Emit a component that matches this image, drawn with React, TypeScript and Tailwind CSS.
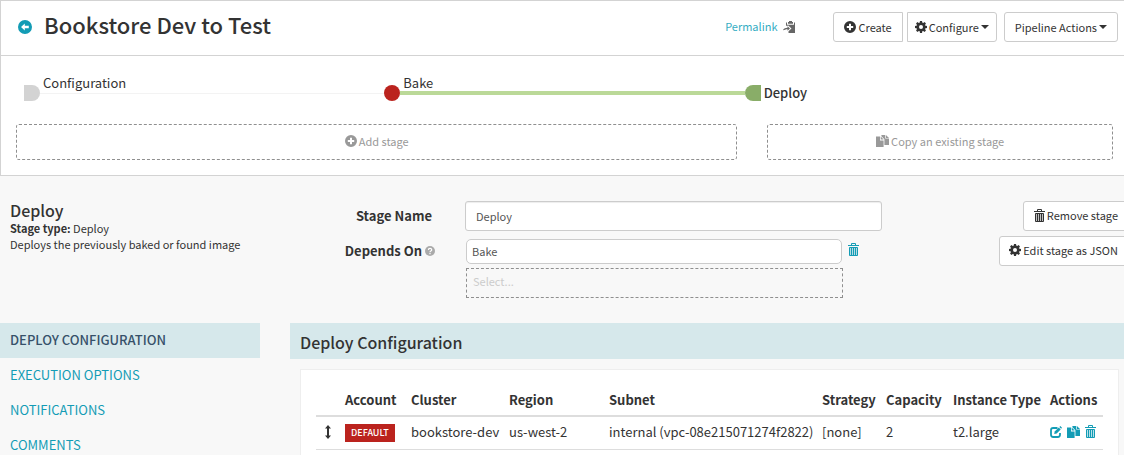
import React from "react";

type IconProps = { className?: string };

function PlusCircle({ className = "" }: IconProps) {
  return (
    <svg viewBox="0 0 12 12" className={className} fill="currentColor" aria-hidden="true">
      <path fillRule="evenodd" d="M6 0a6 6 0 1 1 0 12A6 6 0 0 1 6 0ZM5 2.8V5H2.8v2H5v2.2h2V7h2.2V5H7V2.8Z" />
    </svg>
  );
}

function ArrowCircleLeft({ className = "" }: IconProps) {
  return (
    <svg viewBox="0 0 14 14" className={className} fill="currentColor" aria-hidden="true">
      <path fillRule="evenodd" d="M7 0a7 7 0 1 1 0 14A7 7 0 0 1 7 0ZM6.8 3.4 3 7l3.8 3.6V8.2h4V5.8h-4Z" />
    </svg>
  );
}

function Cog({ className = "" }: IconProps) {
  return (
    <svg viewBox="0 0 12 12" className={className} aria-hidden="true">
      <g fill="currentColor">
        {[0, 45, 90, 135].map((angle) => (
          <path key={angle} d="M5 0h2l.4 2v8L7 12H5l-.4-2V2Z" transform={`rotate(${angle} 6 6)`} />
        ))}
        <circle cx="6" cy="6" r="4.4" />
      </g>
      <circle cx="6" cy="6" r="2" fill="#fff" />
    </svg>
  );
}

function Trash({ className = "" }: IconProps) {
  return (
    <svg viewBox="0 0 11 13" className={className} fill="none" stroke="currentColor" aria-hidden="true">
      <path d="M3.5 2V.5h4V2" />
      <path d="M0 2.5h11" />
      <path d="M1.5 4.5h8v8h-8Z" fill="currentColor" fillOpacity=".3" />
      <path d="M3.5 5v7M5.5 5v7M7.5 5v7" />
    </svg>
  );
}

function Duplicate({ className = "" }: IconProps) {
  return (
    <svg viewBox="0 0 13 12" className={className} fill="currentColor" aria-hidden="true">
      <path d="M0 1.5h4v4h3.6V12H0Z" />
      <path d="m4.7 1.5 3 3h-3Z" />
      <path d="M5.4 0h3.8v3.6H13V10H8.4V4.2L5.4 1.2Z" />
      <path d="m9.9 0 3.1 3H9.9Z" />
    </svg>
  );
}

function Edit({ className = "" }: IconProps) {
  return (
    <svg viewBox="0 0 12 12" className={className} aria-hidden="true">
      <path d="M7.5 2H3.2Q1 2 1 4.2v4.6Q1 11 3.2 11h4.6Q10 11 10 8.8V7" fill="none" stroke="currentColor" strokeWidth="1.8" />
      <path d="m4.2 8 .5-2.5L8.8 1.5l1.9 1.9-4 4.1Z" fill="currentColor" />
      <path d="m9.4.9.9-.9L12 1.8l-.9.9Z" fill="currentColor" />
    </svg>
  );
}

function Paste({ className = "" }: IconProps) {
  return (
    <svg viewBox="0 0 12 12" className={className} fill="currentColor" aria-hidden="true">
      <path d="M6 0h3v1h1v1.8H5V1h1Z" />
      <path d="M3 1.5h1v2.3h7V1.5h1V12H5.5V10.3L8.5 7.5 5 4.3V4.8H3Z" />
      <path d="M4.500 5.200 7 7.500 4.500 9.800V8.300C2.700 8.300 1.500 9 0 9.300c.3-1.700 2-2.500 4.500-2.600Z" />
    </svg>
  );
}

function ResizeVertical({ className = "" }: IconProps) {
  return (
    <svg viewBox="0 0 6 14" className={className} fill="currentColor" aria-hidden="true">
      <path d="M3 0 6 3.6H4v6.800h2L3 14 0 10.400h2V3.600H0Z" />
    </svg>
  );
}

function Question({ className = "" }: IconProps) {
  return (
    <svg viewBox="0 0 10 10" className={className} aria-hidden="true">
      <circle cx="5" cy="5" r="5" fill="currentColor" />
      <path d="M3.4 4c0-2.100 3.300-2.100 3.300-.1C6.700 5.100 5 4.900 5 6.200" fill="none" stroke="#fff" strokeWidth="1.2" />
      <path d="M4.4 7.100h1.200v1.200H4.400Z" fill="#fff" />
    </svg>
  );
}

function Caret() {
  return (
    <svg viewBox="0 0 8 4" className="h-1 w-2" fill="currentColor" aria-hidden="true">
      <path d="M0 0h8L4 4Z" />
    </svg>
  );
}

const button =
  "flex h-[30px] items-center gap-[2px] whitespace-nowrap border border-[#ccc] bg-white text-[11px] leading-4 text-[#333]";

function Header() {
  return (
    <header className="flex h-[55px] items-center border-b border-[#d3d3d3] pb-[2px] pl-[17px] pr-[6px]">
      <a href="#executions" aria-label="Back to executions" className="text-[#139cb5]">
        <ArrowCircleLeft className="size-[14px]" />
      </a>
      <h1 className="ml-3 flex-1 whitespace-nowrap pb-[6px] text-[22px] font-medium leading-8">Bookstore Dev to Test</h1>
      <a href="#permalink" className="pb-[2px] text-[11px] leading-4 text-[#35adc3]">Permalink</a>
      <button type="button" aria-label="Copy permalink" className="ml-[6px] mr-[38px]">
        <Paste className="size-3 text-[#666]" />
      </button>
      <button type="button" className={`${button} rounded-l-[3px] px-[10px]`}>
        <PlusCircle className="size-3" />Create
      </button>
      <button type="button" className={`${button} ml-1 rounded-r-[3px] px-[7px]`}>
        <Cog className="size-3" />Configure<Caret />
      </button>
      <button type="button" className={`${button} ml-[7px] rounded-[3px] px-[10px]`}>
        Pipeline Actions<Caret />
      </button>
    </header>
  );
}

function StageGraph() {
  return (
    <ol className="grid h-4 grid-cols-3 pl-[23px] pr-[19px] text-[13px] leading-4">
      <li className="relative flex items-center">
        <span className="size-4 rounded-r-full bg-[#d3d3d3]" />
        <span className="h-px flex-1 bg-[#f3f3f3]" />
        <a href="#configuration" className="absolute -top-[10px] left-[19px]">Configuration</a>
      </li>
      <li className="relative flex items-center">
        <span className="size-4 rounded-full bg-[#bb231e]" />
        <span className="h-1 flex-1 bg-[#bbd998]" />
        <a href="#bake" className="absolute -top-[10px] left-[19px]">Bake</a>
      </li>
      <li className="flex items-center">
        <span className="size-4 rounded-l-full bg-[#89ad68]" />
        <a href="#deploy" className="ml-[3px] font-medium">Deploy</a>
      </li>
    </ol>
  );
}

const dashed =
  "flex h-9 items-center justify-center gap-[2px] rounded-[3px] border border-dashed border-[#8f8f8f] pb-[2px] text-[11px] leading-4 text-[#999]";

function StageForm() {
  return (
    <section className="flex px-[10px]">
      <div className="w-[310px] shrink-0 pt-6">
        <h2 className="text-[16px] font-medium leading-5">Deploy</h2>
        <p className="text-[11px] leading-4"><strong>Stage type:</strong> Deploy</p>
        <p className="text-[11px] leading-4">Deploys the previously baked or found image</p>
      </div>
      <form className="grid min-w-0 flex-1 grid-cols-[115px_1fr] gap-x-[30px] gap-y-[8px] pt-[25px] text-[13px]">
        <label htmlFor="stage-name" className="pr-[3px] text-right font-bold leading-[30px]">Stage Name</label>
        <input
          id="stage-name"
          defaultValue="Deploy"
          className="h-[30px] w-full rounded-[3px] border border-[#ccc] bg-white px-[10px] text-[11px] text-[#555] shadow-[inset_0_1px_1px_rgba(0,0,0,0.075)]"
        />
        <div className="flex items-center justify-end gap-[3px] self-start font-bold leading-6">
          <label htmlFor="depends-on" className="whitespace-nowrap">Depends On</label>
          <Question className="size-[10px] text-[#aaa]" />
        </div>
        <div className="pl-px">
          <div className="flex items-center gap-[6px]">
            <select
              id="depends-on"
              className="h-[25px] min-w-0 flex-1 appearance-none rounded-[5px] border border-[#ccc] bg-white px-[5px] pb-[2px] text-[11px] leading-4 text-[#555]"
            >
              <option>Bake</option>
            </select>
            <button type="button" aria-label="Remove dependency" className="mr-[23px] pb-[4px]">
              <Trash className="h-[13px] w-[11px] text-[#139cb5]" />
            </button>
          </div>
          <select
            aria-label="Add dependency"
            className="mt-1 block h-[30px] w-[calc(100%-39px)] appearance-none border border-dashed border-[#8f8f8f] px-[6px] pb-1 text-[11px] leading-4 text-[#ccc]"
          >
            <option>Select...</option>
          </select>
        </div>
      </form>
      <div className="-mr-[22px] ml-[118px] flex w-[136px] shrink-0 flex-col items-end gap-[5px] pt-[25px]">
        <button type="button" className={`${button} rounded-[3px] pb-[2px] pl-[10px] pr-[17px]`}>
          <Trash className="h-[13px] w-[11px]" />Remove stage
        </button>
        <button type="button" className={`${button} rounded-[3px] pb-[2px] pl-[9px] pr-[17px]`}>
          <Cog className="size-3" />Edit stage as JSON
        </button>
      </div>
    </section>
  );
}

const sections = ["Execution Options", "Notifications", "Comments"];

function SideNav() {
  return (
    <nav className="w-[260px] shrink-0 text-[13px] uppercase leading-[33px]">
      <a href="#deploy-configuration" className="block bg-[#d6e8eb] pb-[2px] pl-[10px] font-medium text-[#36516a]">
        Deploy Configuration
      </a>
      {sections.map((name) => (
        <a key={name} href="#section" className="block pb-[2px] pl-[10px] text-[#139cb5]">{name}</a>
      ))}
    </nav>
  );
}

function ClusterTable() {
  return (
    <table className="w-full table-fixed text-left text-[13px] leading-5">
      <colgroup>
        <col className="w-[29px]" />
        <col className="w-[66px]" />
        <col className="w-[98px]" />
        <col className="w-[100px]" />
        <col />
        <col className="w-[64px]" />
        <col className="w-[67px]" />
        <col className="w-[97px]" />
        <col className="w-[53px]" />
      </colgroup>
      <thead>
        <tr className="h-8 whitespace-nowrap border-b-2 border-[#ddd]">
          <th />
          <th>Account</th>
          <th>Cluster</th>
          <th>Region</th>
          <th>Subnet</th>
          <th>Strategy</th>
          <th>Capacity</th>
          <th>Instance Type</th>
          <th>Actions</th>
        </tr>
      </thead>
      <tbody>
        <tr className="h-[33px] whitespace-nowrap border-b border-[#ddd] [&>td]:pb-[2px]">
          <td className="pl-[9px]"><ResizeVertical className="h-[14px] w-[6px]" /></td>
          <td>
            <span className="inline-block bg-[#bb231e] px-[6px] text-[9px] font-medium leading-[18px] text-white">DEFAULT</span>
          </td>
          <td>bookstore-dev</td>
          <td>us-west-2</td>
          <td>internal (vpc-08e215071274f2822)</td>
          <td>[none]</td>
          <td>2</td>
          <td>t2.large</td>
          <td>
            <div className="flex items-center gap-[5px] text-[#139cb5]">
              <button type="button" aria-label="Edit cluster"><Edit className="size-3" /></button>
              <button type="button" aria-label="Duplicate cluster"><Duplicate className="h-3 w-[13px]" /></button>
              <button type="button" aria-label="Delete cluster"><Trash className="h-[13px] w-[11px]" /></button>
            </div>
          </td>
        </tr>
      </tbody>
    </table>
  );
}

export default function App() {
  return (
    <div className="h-screen overflow-hidden bg-[#f8f8f8] font-['Noto_Sans_CJK_SC',sans-serif] text-[#333]">
      <div className="border-b border-l border-t border-[#d3d3d3] bg-white">
        <Header />
        <div className="pb-[15px] pt-[29px]">
          <StageGraph />
          <div className="mt-[23px] grid grid-cols-12 gap-x-[30px] pl-[15px] pr-[11px]">
            <button type="button" className={`${dashed} col-span-8`}>
              <PlusCircle className="size-3" />Add stage
            </button>
            <button type="button" className={`${dashed} col-span-4`}>
              <Duplicate className="h-3 w-[13px]" />Copy an existing stage
            </button>
          </div>
        </div>
      </div>
      <StageForm />
      <div className="mt-[25px] flex gap-[30px]">
        <SideNav />
        <main className="min-w-0 flex-1">
          <h2 className="bg-[#d6e8eb] pl-[10px] pt-[2px] text-[16px] font-medium leading-[34px]">Deploy Configuration</h2>
          <div className="ml-[10px] mr-[5px] mt-[10px] border border-[#eee] bg-white px-[15px] pb-10 pt-[14px]">
            <ClusterTable />
          </div>
        </main>
      </div>
    </div>
  );
}
